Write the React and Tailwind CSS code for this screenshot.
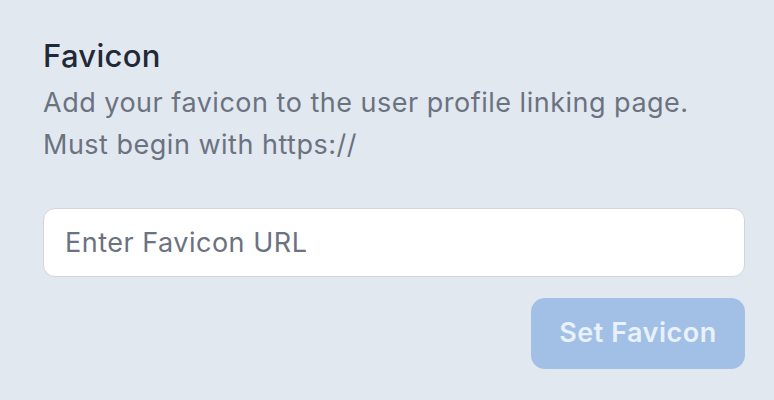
export default function App() {
  return (
    <div className="min-h-screen bg-[#e2e8f0] pl-[43px] pr-[29px] pt-[36px] font-['Inter',sans-serif]">
      <h2 className="text-[31px] font-medium leading-[40px] tracking-[0.3px] text-[#1f2937]">Favicon</h2>
      <p className="mt-[6px] text-[27px] leading-[42px] tracking-[0.5px] text-[#6b7280]">
        Add your favicon to the user profile linking page.
        <br />
        Must begin with https://
      </p>
      <input
        type="text"
        placeholder="Enter Favicon URL"
        className="mt-[42px] block h-[69px] w-full rounded-[12px] border border-[#d1d5db] bg-white px-[21px] text-[27px] tracking-[0.5px] text-[#1f2937] outline-none placeholder:text-[#6b7280]"
      />
      <div className="mt-[21px] flex justify-end">
        <button
          type="button"
          disabled
          className="h-[71px] w-[214px] rounded-[14px] bg-[#a2c0e5] text-[27px] font-semibold tracking-[0.5px] text-[#e8f1fc]"
        >
          Set Favicon
        </button>
      </div>
    </div>
  );
}
